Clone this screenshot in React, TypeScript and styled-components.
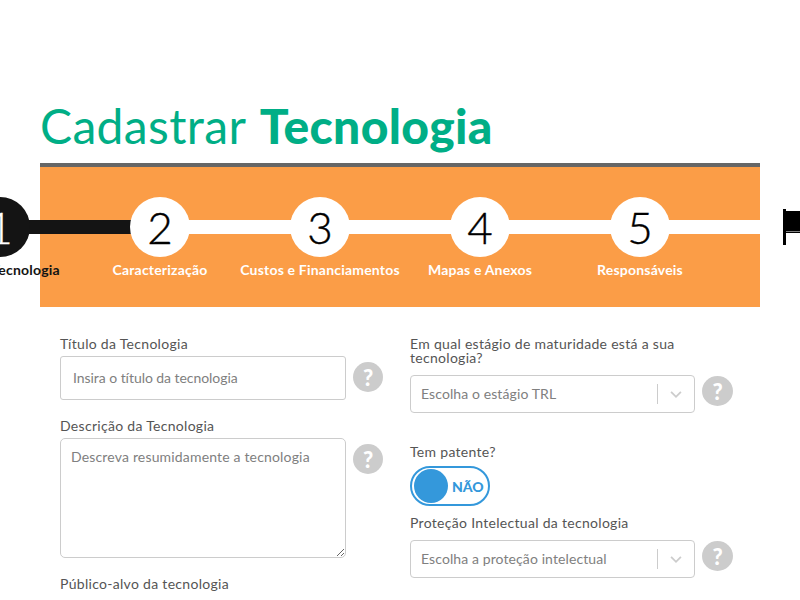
import React from 'react';
import styled, { createGlobalStyle } from 'styled-components';

const GlobalStyle = createGlobalStyle`
  html, body {
    margin: 0;
    height: 100%;
    overflow: hidden;
    background: #fff;
    font-family: 'Lato', 'Liberation Sans', sans-serif;
  }
  * {
    box-sizing: border-box;
  }
`;

const Page = styled.div`
  padding: 97px 40px 0;
`;

const Title = styled.h1`
  margin: 0 0 8px;
  font-size: 48px;
  line-height: 58px;
  font-weight: 400;
  letter-spacing: 0.35px;
  word-spacing: 2px;
  color: #00ae86;
  strong {
    font-weight: 900;
  }
`;

const StepsBar = styled.div`
  height: 144px;
  border-top: 4px solid #666;
  background: #fb9d47;
  padding-top: 30px;
`;

const StepsList = styled.ol`
  display: flex;
  margin: 0 0 0 -120px;
  padding: 0;
  list-style: none;
`;

const Step = styled.li`
  position: relative;
  flex: 0 0 160px;
  min-width: 0;
  display: flex;
  flex-direction: column;
  align-items: center;
`;

const Connector = styled.span<{ $done?: boolean }>`
  position: absolute;
  top: 23px;
  left: 50%;
  width: 100%;
  height: 14px;
  background: ${({ $done }) => ($done ? '#141414' : '#fff')};
`;

const Circle = styled.span<{ $done?: boolean }>`
  position: relative;
  width: 60px;
  height: 60px;
  border-radius: 50%;
  display: flex;
  align-items: center;
  justify-content: center;
  font-size: 44px;
  font-weight: 300;
  -webkit-text-stroke: 0.4px currentColor;
  color: ${({ $done }) => ($done ? '#fff' : '#000')};
  background: ${({ $done }) => ($done ? '#141414' : '#fff')};
`;

const StepLabel = styled.span<{ $done?: boolean }>`
  margin-top: 4px;
  font-size: 14px;
  line-height: 17px;
  font-weight: 700;
  letter-spacing: 0.2px;
  white-space: nowrap;
  color: ${({ $done }) => ($done ? '#141414' : '#fff')};
`;

const FlagIcon = styled.svg`
  position: absolute;
  left: 13px;
  top: 12px;
`;

const Form = styled.form`
  display: grid;
  grid-template-columns: 350px 285px;
  padding: 30px 0 0 20px;
`;

const Column = styled.div`
  display: flex;
  flex-direction: column;
`;

const Field = styled.div<{ $gap?: number }>`
  margin-bottom: ${({ $gap }) => $gap ?? 19}px;
`;

const Label = styled.label`
  display: block;
  margin-bottom: 5px;
  font-size: 14px;
  line-height: 14px;
  color: #555;
  letter-spacing: 0.3px;
`;

const FieldRow = styled.div<{ $spaced?: boolean }>`
  display: flex;
  align-items: flex-start;
  gap: 7px;
  margin-top: ${({ $spaced }) => ($spaced ? 10 : 0)}px;
`;

const TextInput = styled.input`
  width: 286px;
  height: 44px;
  padding: 0 12px 2px;
  border: 1px solid #ccc;
  border-radius: 3px;
  font: inherit;
  font-size: 14px;
  letter-spacing: -0.05px;
  &::placeholder {
    color: #808080;
    opacity: 1;
  }
`;

const TextArea = styled.textarea`
  display: block;
  width: 286px;
  height: 120px;
  padding: 9px 10px;
  border: 1px solid #ccc;
  border-radius: 5px;
  font: inherit;
  font-size: 14px;
  letter-spacing: 0.17px;
  &::placeholder {
    color: #808080;
    opacity: 1;
  }
`;

const Help = styled.span<{ $large?: boolean }>`
  flex: none;
  width: ${({ $large }) => ($large ? 31 : 30)}px;
  height: 30px;
  margin-top: ${({ $large }) => ($large ? 1 : 6)}px;
  border-radius: 50%;
  display: flex;
  align-items: center;
  justify-content: center;
  background: #ccc;
  color: #fff;
  font-size: 22px;
  font-weight: 900;
`;

const Select = styled.div`
  flex: none;
  width: 285px;
  height: 38px;
  display: flex;
  align-items: center;
  padding-left: 10px;
  border: 1px solid #ccc;
  border-radius: 4px;
  font-size: 14px;
  letter-spacing: 0.1px;
  color: #808080;
`;

const SelectText = styled.span`
  flex: 1;
  padding-bottom: 2px;
`;

const SelectArrow = styled.span`
  width: 37px;
  height: 20px;
  display: flex;
  align-items: center;
  justify-content: center;
  border-left: 1px solid #ccc;
`;

const Toggle = styled.div`
  width: 80px;
  height: 40px;
  margin-top: 7px;
  display: flex;
  align-items: center;
  gap: 4px;
  padding: 0 2px;
  border: 2px solid #3498db;
  border-radius: 20px;
  color: #3498db;
  font-size: 14px;
  font-weight: 900;
`;

const Knob = styled.span`
  width: 34px;
  height: 34px;
  border-radius: 50%;
  background: #3498db;
`;

const Chevron = () => (
  <svg width="14" height="14" viewBox="0 0 20 20">
    <path d="M3 7l7 7 7-7" fill="none" stroke="#ccc" strokeWidth="2.6" />
  </svg>
);

const steps = [
  'Sobre a Tecnologia',
  'Caracterização',
  'Custos e Financiamentos',
  'Mapas e Anexos',
  'Responsáveis',
];

const App: React.FC = () => (
  <Page>
    <GlobalStyle />
    <Title>
      Cadastrar <strong>Tecnologia</strong>
    </Title>
    <StepsBar>
      <StepsList>
        {steps.map((step, index) => (
          <Step key={step}>
            <Connector $done={index === 0} />
            <Circle $done={index === 0}>{index + 1}</Circle>
            <StepLabel $done={index === 0}>{step}</StepLabel>
          </Step>
        ))}
        <Step>
          <Circle>
            <FlagIcon width="40" height="36" viewBox="0 0 40 36">
              <path d="M0 0h3v36H0z" />
              <path d="M3 2h37v20H3zM3 22.5h37v1.5H3zM28 24h2v5h-2z" />
            </FlagIcon>
          </Circle>
        </Step>
      </StepsList>
    </StepsBar>
    <Form>
      <Column>
        <Field>
          <Label>Título da Tecnologia</Label>
          <FieldRow>
            <TextInput placeholder="Insira o título da tecnologia" />
            <Help>?</Help>
          </FieldRow>
        </Field>
        <Field>
          <Label>Descrição da Tecnologia</Label>
          <FieldRow>
            <TextArea placeholder="Descreva resumidamente a tecnologia" />
            <Help>?</Help>
          </FieldRow>
        </Field>
        <Field>
          <Label>Público-alvo da tecnologia</Label>
        </Field>
      </Column>
      <Column>
        <Field $gap={32}>
          <Label>Em qual estágio de maturidade está a sua tecnologia?</Label>
          <FieldRow $spaced>
            <Select>
              <SelectText>Escolha o estágio TRL</SelectText>
              <SelectArrow>
                <Chevron />
              </SelectArrow>
            </Select>
            <Help $large>?</Help>
          </FieldRow>
        </Field>
        <Field $gap={10}>
          <Label>Tem patente?</Label>
          <Toggle>
            <Knob />
            NÃO
          </Toggle>
        </Field>
        <Field>
          <Label>Proteção Intelectual da tecnologia</Label>
          <FieldRow $spaced>
            <Select>
              <SelectText>Escolha a proteção intelectual</SelectText>
              <SelectArrow>
                <Chevron />
              </SelectArrow>
            </Select>
            <Help $large>?</Help>
          </FieldRow>
        </Field>
      </Column>
    </Form>
  </Page>
);

export default App;
